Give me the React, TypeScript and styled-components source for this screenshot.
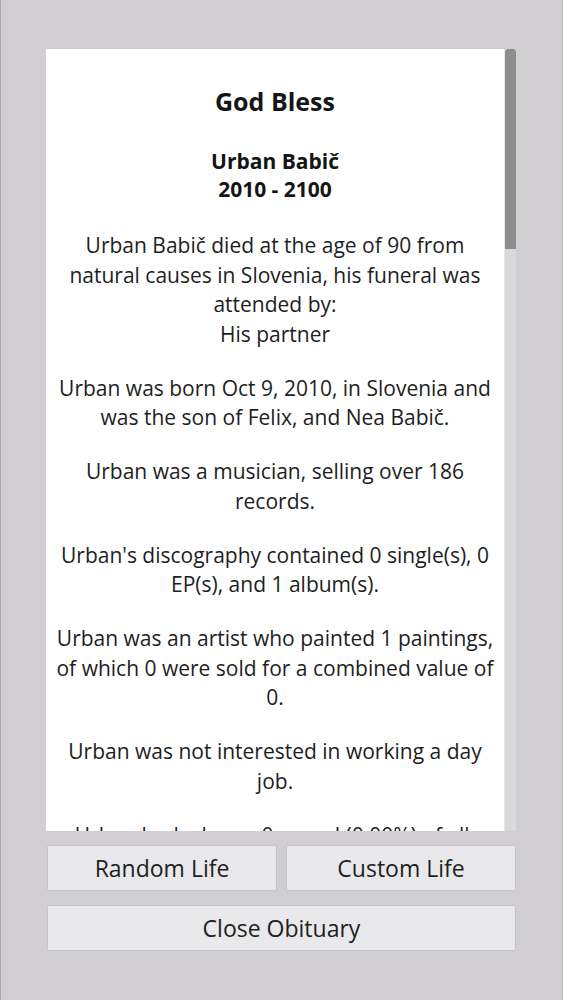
import React from "react";
import styled, { createGlobalStyle } from "styled-components";

const GlobalStyle = createGlobalStyle`
  html, body {
    margin: 0;
    padding: 0;
    background: #d0ced1;
    font-family: "Open Sans", "Liberation Sans", sans-serif;
  }
`;

const Screen = styled.div`
  width: 563px;
  height: 1000px;
  box-sizing: border-box;
  background: #d0ced1;
  border-left: 1px solid #a9a8aa;
  border-right: 1px solid #b5b4b6;
  padding: 49px 46px 0 45px;
  display: flex;
  flex-direction: column;
`;

const Panel = styled.div`
  height: 782px;
  background: #ffffff;
  display: flex;
  flex-direction: row;
  overflow: hidden;
`;

const Content = styled.div`
  flex: 1;
  overflow: hidden;
  padding: 35px 10px 0;
  text-align: center;
  color: #151515;
`;

const Title = styled.div`
  font-size: 25px;
  font-weight: 700;
  line-height: 34px;
  margin-bottom: 29px;
`;

const Name = styled.div`
  font-size: 21px;
  font-weight: 700;
  line-height: 28px;
  margin-bottom: 28px;
`;

const Paragraph = styled.p`
  margin: 0 0 24.3px;
  font-size: 21px;
  line-height: 29.6px;
  color: #1e1e1e;
`;

const ScrollTrack = styled.div`
  width: 11px;
  background: #d9d8da;
  border-left: 1px solid #e6e5e7;
  display: flex;
  flex-direction: column;
`;

const ScrollThumb = styled.div`
  height: 200px;
  background: #8d8d8d;
  border-radius: 3px 3px 0 0;
`;

const ButtonRow = styled.div`
  display: flex;
  gap: 9px;
  margin-top: 14px;
  margin-left: 1px;
`;

const Button = styled.button`
  flex: 1;
  height: 46px;
  box-sizing: border-box;
  background: #e9e8ea;
  border: 1px solid #c4c3c5;
  border-radius: 2px;
  font-family: "Open Sans", "Liberation Sans", sans-serif;
  font-size: 23px;
  color: #1e1e1e;
  padding: 0;
  cursor: pointer;
`;

const paragraphs: React.ReactNode[] = [
  <>
    Urban Babič died at the age of 90 from natural causes in Slovenia, his
    funeral was attended by:
    <br />
    His partner
  </>,
  "Urban was born Oct 9, 2010, in Slovenia and was the son of Felix, and Nea Babič.",
  "Urban was a musician, selling over 186 records.",
  "Urban's discography contained 0 single(s), 0 EP(s), and 1 album(s).",
  "Urban was an artist who painted 1 paintings, of which 0 were sold for a combined value of 0.",
  "Urban was not interested in working a day job.",
  "Urban had a lower 0 award (0.00%) of all.",
];

export default function App() {
  return (
    <>
      <GlobalStyle />
      <Screen>
        <Panel>
          <Content>
            <Title>God Bless</Title>
            <Name>
              Urban Babič
              <br />
              2010 - 2100
            </Name>
            {paragraphs.map((p, i) => (
              <Paragraph key={i}>{p}</Paragraph>
            ))}
          </Content>
          <ScrollTrack>
            <ScrollThumb />
          </ScrollTrack>
        </Panel>
        <ButtonRow>
          <Button>Random Life</Button>
          <Button>Custom Life</Button>
        </ButtonRow>
        <ButtonRow>
          <Button>Close Obituary</Button>
        </ButtonRow>
      </Screen>
    </>
  );
}
